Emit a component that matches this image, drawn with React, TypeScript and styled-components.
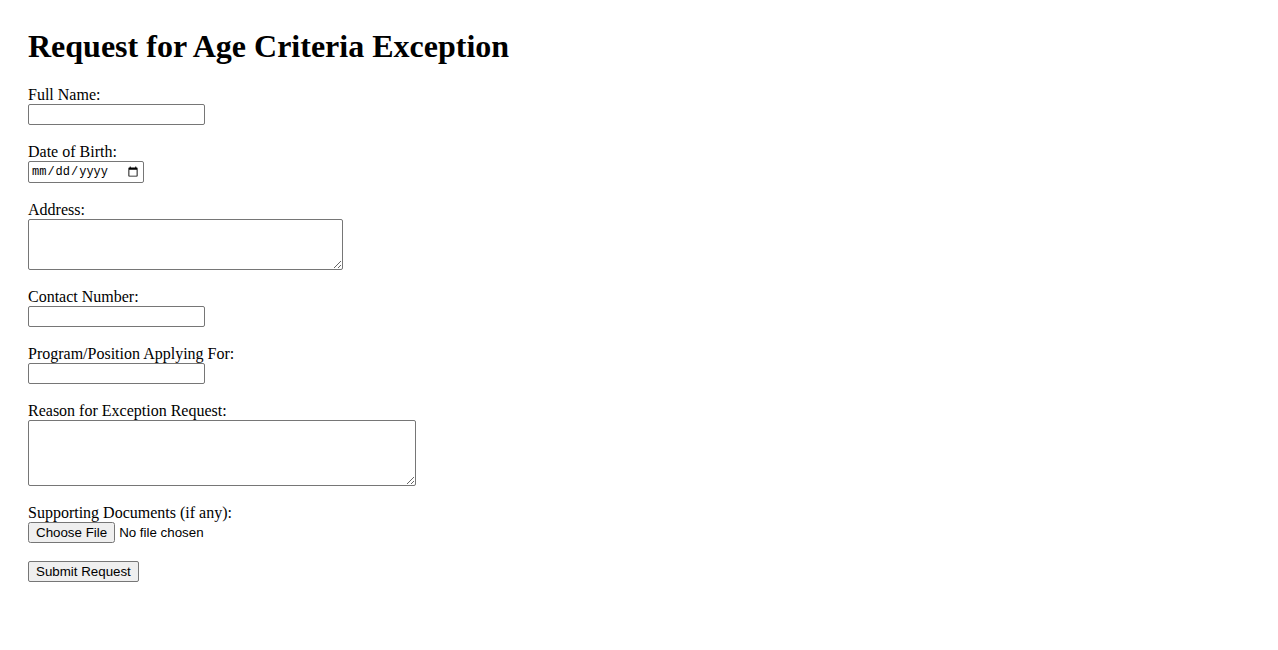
import * as React from 'react';
import styled, { createGlobalStyle } from 'styled-components';

const GlobalStyle = createGlobalStyle`
	body {
		margin: 0;
		padding: 28px;
		font-family: "Liberation Serif", "Times New Roman", serif;
		font-size: 16px;
		color: #000;
		background: #fff;
	}
`;

const Title = styled.h1`
	font-size: 32px;
	font-weight: bold;
	margin: 0 0 21px;
`;

const Form = styled.form`
	display: block;
`;

const Label = styled.label`
	display: inline;
`;

const TextInput = styled.input`
	font-family: "Liberation Sans", Arial, sans-serif;
	font-size: 13.33px;
	width: 177px;
	height: 21px;
	box-sizing: border-box;
	border: 1px solid #767676;
	border-radius: 2px;
	padding: 1px 2px;
`;

const DateInput = styled.input`
	font-family: "Liberation Mono", monospace;
	font-size: 12px;
	width: 116px;
	height: 22px;
	box-sizing: border-box;
	border: 1px solid #767676;
	border-radius: 2px;
	padding: 1px 2px;
`;

const TextArea = styled.textarea<{ $w: number; $h: number }>`
	font-family: "Liberation Mono", monospace;
	font-size: 13.33px;
	width: ${p => p.$w}px;
	height: ${p => p.$h}px;
	box-sizing: border-box;
	border: 1px solid #767676;
	border-radius: 2px;
	padding: 2px;
	vertical-align: bottom;
`;

const FileInput = styled.input`
	font-family: "Liberation Sans", Arial, sans-serif;
	font-size: 13.33px;
`;

const SubmitButton = styled.button`
	font-family: "Liberation Sans", Arial, sans-serif;
	font-size: 13.33px;
	height: 21px;
	padding: 1px 7px;
	border: 1px solid #767676;
	border-radius: 2px;
	background: #efefef;
	color: #000;
`;

export default function App() {
	return (
		<>
			<GlobalStyle />
			<Title>Request for Age Criteria Exception</Title>
			<Form onSubmit={e => e.preventDefault()}>
				<Label htmlFor="name">Full Name:</Label><br />
				<TextInput type="text" id="name" /><br /><br />

				<Label htmlFor="dob">Date of Birth:</Label><br />
				<DateInput type="date" id="dob" /><br /><br />

				<Label htmlFor="address">Address:</Label><br />
				<TextArea id="address" $w={315} $h={51} /><br /><br />

				<Label htmlFor="contact">Contact Number:</Label><br />
				<TextInput type="text" id="contact" /><br /><br />

				<Label htmlFor="program">Program/Position Applying For:</Label><br />
				<TextInput type="text" id="program" /><br /><br />

				<Label htmlFor="reason">Reason for Exception Request:</Label><br />
				<TextArea id="reason" $w={388} $h={66} /><br /><br />

				<Label htmlFor="docs">Supporting Documents (if any):</Label><br />
				<FileInput type="file" id="docs" /><br /><br />

				<SubmitButton type="submit">Submit Request</SubmitButton>
			</Form>
		</>
	);
}
